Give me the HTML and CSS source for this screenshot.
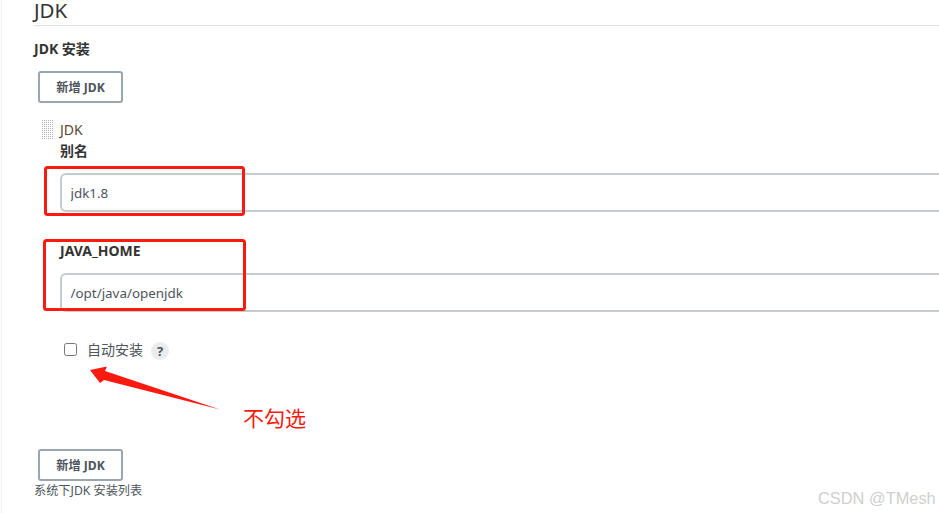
FILE: index.html
```html
<!DOCTYPE html>
<html lang="zh-CN">
<head>
    <meta charset="UTF-8">
    <title>JDK</title>
    <link rel="stylesheet" href="styles.css">
</head>
<body>
    <div class="page">
        <h2 class="section-title">JDK</h2>
        <div class="group-label">JDK 安装</div>
        <button class="add-button">新增 JDK</button>

        <div class="repeat-item">
            <div class="handle"></div>
            <div class="item-body">
                <div class="item-title">JDK</div>
                <label class="field-label">别名</label>
                <input class="text-input" type="text" value="jdk1.8">
                <label class="field-label field-home">JAVA_HOME</label>
                <input class="text-input" type="text" value="/opt/java/openjdk">
                <div class="check-row">
                    <input class="check-box" type="checkbox">
                    <span class="check-label">自动安装</span>
                    <span class="help-icon">?</span>
                </div>
            </div>
        </div>

        <button class="add-button add-bottom">新增 JDK</button>
        <div class="group-hint">系统下JDK 安装列表</div>
    </div>

    <!-- 截图上的红色标注 -->
    <svg class="notes" width="939" height="513" viewBox="0 0 939 513">
        <rect x="45.5" y="167.5" width="198" height="47" rx="2" fill="none" stroke="#fb1a10" stroke-width="3"/>
        <rect x="44.5" y="240.5" width="200" height="69" rx="2" fill="none" stroke="#fb1a10" stroke-width="3"/>
        <path d="M90 370 L107 366.5 L105 371 L220 409.5 L104 380 L100 383 Z" fill="#fb1a10"/>
    </svg>
    <div class="note-text">不勾选</div>
    <div class="watermark">CSDN @TMesh</div>
</body>
</html>
```

FILE: styles.css
```css
* {
    box-sizing: border-box;
}

body {
    margin: 0;
    height: 513px;
    overflow: hidden;
    background-color: #fff;
    font-family: "Noto Sans", "Noto Sans CJK SC", sans-serif;
    color: #333;
}

.page {
    height: 513px;
    margin-left: 1px;
    padding-left: 32px;
    border-left: 1px solid #f2f2f2;
}

.section-title {
    margin: 0;
    height: 26px;
    font-size: 20.5px;
    font-weight: 400;
    line-height: 21px;
    border-bottom: 1px solid #dfe1e3;
}

.group-label {
    margin-top: 14px;
    font-size: 14px;
    font-weight: 700;
    line-height: 18px;
}

.add-button {
    display: block;
    width: 85px;
    height: 32px;
    margin: 13px 0 0 4px;
    padding: 0;
    background-color: #fff;
    border: 2px solid #9aa6b0;
    border-radius: 3px;
    font-family: inherit;
    font-size: 12.2px;
    font-weight: 700;
    color: #4d545d;
}

.add-bottom {
    margin-top: 0;
}

.repeat-item {
    display: flex;
    margin: 17px 0 0 7px;
    height: 329px;
}

/* 拖动手柄的点阵 */
.handle {
    width: 12px;
    height: 20px;
    background-image: conic-gradient(#b0b0b0 25%, transparent 0);
    background-size: 2px 2px;
}

.item-body {
    flex: 1;
    margin-left: 7px;
    margin-right: -1px;
}

.item-title {
    font-size: 14px;
    line-height: 18px;
    color: #5c4a32;
    margin-top: 1px;
}

.field-label {
    display: block;
    margin-top: 3px;
    font-size: 14px;
    font-weight: 700;
    line-height: 18px;
}

.field-home {
    margin-top: 30px;
}

.text-input {
    display: block;
    width: 100%;
    height: 39px;
    margin-top: 13px;
    padding: 1px 9px 0 8.5px;
    background-color: #fff;
    border: 2px solid #c3cccf;
    border-right: 0;
    border-radius: 6px 0 0 6px;
    font-family: inherit;
    font-size: 13.4px;
    color: #4d545d;
}

.check-row {
    display: flex;
    align-items: center;
    height: 20px;
    margin: 29px 0 0 4px;
}

.check-box {
    width: 13px;
    height: 13px;
    margin: 0 10px 3px 0;
}

.check-label {
    font-size: 14px;
    line-height: 18px;
    margin-bottom: 2px;
    color: #4d545d;
}

.help-icon {
    width: 18px;
    height: 18px;
    margin-left: 8px;
    margin-bottom: 1px;
    border-radius: 50%;
    background-color: #eaeced;
    font-size: 13px;
    font-weight: 700;
    line-height: 18px;
    text-align: center;
    color: #4d545d;
}

.group-hint {
    font-size: 12.2px;
    line-height: 18px;
    color: #4d545d;
    margin-top: 1px;
}

.notes {
    position: absolute;
    left: 0;
    top: 0;
}

.note-text {
    position: absolute;
    left: 243px;
    top: 403px;
    font-size: 21px;
    line-height: 30px;
    color: #fb1a10;
}

.watermark {
    position: absolute;
    left: 818px;
    top: 488px;
    font-family: "Liberation Sans", sans-serif;
    font-size: 16.4px;
    line-height: 20px;
    color: #cfcfcf;
}
```
